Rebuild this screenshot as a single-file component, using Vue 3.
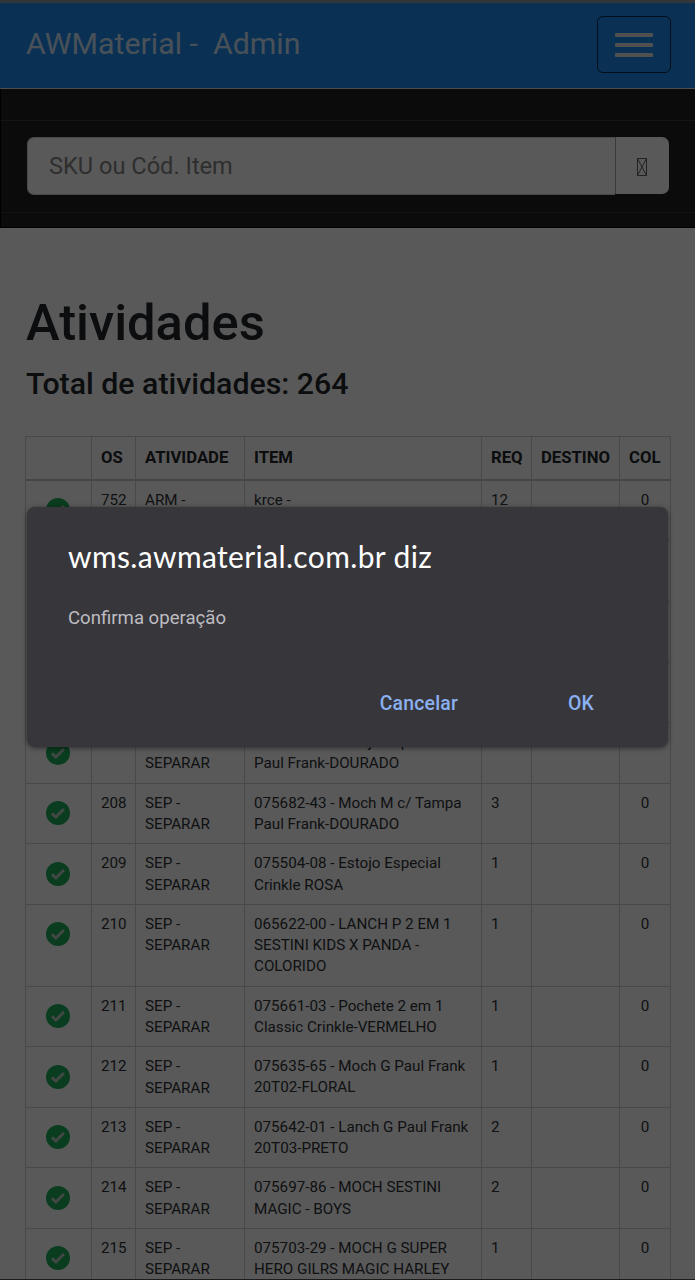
<script setup>
const columns = ['', 'OS', 'ATIVIDADE', 'ITEM', 'REQ', 'DESTINO', 'COL']

const atividades = [
  { os: 752, tipo: 'ARM -', item: ['krce -'], req: 12, col: 0 },
  {},
  {},
  {},
  { tipo: 'SEP - SEPARAR', item: ['075684-43 - Estojo Especial', 'Paul Frank-DOURADO'] },
  { os: 208, tipo: 'SEP - SEPARAR', item: ['075682-43 - Moch M c/ Tampa', 'Paul Frank-DOURADO'], req: 3, col: 0 },
  { os: 209, tipo: 'SEP - SEPARAR', item: ['075504-08 - Estojo Especial', 'Crinkle ROSA'], req: 1, col: 0 },
  { os: 210, tipo: 'SEP - SEPARAR', item: ['065622-00 - LANCH P 2 EM 1', 'SESTINI KIDS X PANDA -', 'COLORIDO'], req: 1, col: 0 },
  { os: 211, tipo: 'SEP - SEPARAR', item: ['075661-03 - Pochete 2 em 1', 'Classic Crinkle-VERMELHO'], req: 1, col: 0 },
  { os: 212, tipo: 'SEP - SEPARAR', item: ['075635-65 - Moch G Paul Frank', '20T02-FLORAL'], req: 1, col: 0 },
  { os: 213, tipo: 'SEP - SEPARAR', item: ['075642-01 - Lanch G Paul Frank', '20T03-PRETO'], req: 2, col: 0 },
  { os: 214, tipo: 'SEP - SEPARAR', item: ['075697-86 - MOCH SESTINI', 'MAGIC - BOYS'], req: 2, col: 0 },
  { os: 215, tipo: 'SEP - SEPARAR', item: ['075703-29 - MOCH G SUPER', 'HERO GILRS MAGIC HARLEY'], req: 1, col: 0 }
]
</script>

<template>
  <div class="screen">
    <nav class="navbar">
      <span class="brand">AWMaterial -&nbsp; Admin</span>
      <button class="toggler" aria-label="Menu">
        <span class="bar"></span>
        <span class="bar"></span>
        <span class="bar"></span>
      </button>
    </nav>

    <div class="search-area">
      <div class="search-row">
        <div class="search-group">
          <input class="search-input" type="text" placeholder="SKU ou Cód. Item" />
          <button class="search-button" aria-label="Buscar">
            <svg width="10" height="18" viewBox="0 0 10 18">
              <path d="M0.5 0.5h9v17h-9zM0.5 0.5l9 17M9.5 0.5l-9 17" />
            </svg>
          </button>
        </div>
      </div>
    </div>

    <main class="content">
      <h1>Atividades</h1>
      <h2>Total de atividades: 264</h2>

      <table class="table">
        <thead>
          <tr>
            <th v-for="column in columns" :key="column">{{ column }}</th>
          </tr>
        </thead>
        <tbody>
          <tr v-for="(a, index) in atividades" :key="index">
            <td class="check">
              <svg width="24" height="24" viewBox="0 0 24 24">
                <circle cx="12" cy="12" r="12" />
                <path d="M6 12.4l3.9 3.6 8-8" />
              </svg>
            </td>
            <td>{{ a.os }}</td>
            <td class="tipo">{{ a.tipo }}</td>
            <td><div v-for="line in a.item" :key="line" class="line">{{ line }}</div></td>
            <td>{{ a.req }}</td>
            <td></td>
            <td class="center">{{ a.col }}</td>
          </tr>
        </tbody>
      </table>
    </main>

    <div class="backdrop">
      <div class="dialog" role="dialog">
        <div class="dialog-title">wms.awmaterial.com.br diz</div>
        <div class="dialog-text">Confirma operação</div>
        <div class="dialog-actions">
          <button>Cancelar</button>
          <button>OK</button>
        </div>
      </div>
    </div>
  </div>
</template>

<style>
body {
  margin: 0;
  background: #595959;
}
</style>

<style scoped>
.screen {
  position: relative;
  box-sizing: border-box;
  width: 695px;
  height: 1280px;
  overflow: hidden;
  background: #fff;
  border-bottom: 1px solid #1c1c1c;
  color: #212529;
  font-family: Roboto, "Liberation Sans", sans-serif;
}

.navbar {
  box-sizing: border-box;
  height: 89px;
  padding: 0 24px 0 26px;
  display: flex;
  align-items: center;
  justify-content: space-between;
  background: #1d8cf0;
  border-top: 3px solid #8f9aa3;
  border-bottom: 1px solid #d3e2ef;
}

.brand {
  margin-top: -3px;
  font-size: 30.3px;
  line-height: 36px;
  color: rgba(255, 255, 255, 0.8);
  white-space: pre;
}

.toggler {
  box-sizing: border-box;
  width: 74px;
  height: 57px;
  margin-top: -2px;
  padding: 0;
  display: flex;
  flex-direction: column;
  align-items: center;
  justify-content: center;
  gap: 6px;
  background: none;
  border: 1px solid #06294a;
  border-radius: 6px;
}

.bar {
  width: 38px;
  height: 4px;
  border-radius: 1px;
  background: #e4e4e4;
}

.search-area {
  box-sizing: border-box;
  height: 139px;
  padding: 31px 0 14px;
  background: #222;
  border-bottom: 1px solid #000;
  border-left: 1px solid #000;
}

.search-row {
  box-sizing: border-box;
  height: 93px;
  padding: 16px 26px 18px;
  border-top: 1px solid #3e3e3e;
  border-bottom: 1px solid #343434;
}

.search-group {
  display: flex;
  height: 58px;
}

.search-input {
  box-sizing: border-box;
  flex: 1;
  min-width: 0;
  padding: 0 21px;
  border: 1px solid #d2d2d2;
  border-right: 0;
  border-radius: 7px 0 0 7px;
  background: #fff;
  font-family: inherit;
  font-size: 23.6px;
}

.search-input::placeholder {
  color: #858585;
}

.search-button {
  box-sizing: border-box;
  width: 54px;
  height: 57px;
  padding: 2px 1px 0 0;
  display: flex;
  align-items: center;
  justify-content: center;
  background: #fff;
  border: 0;
  border-left: 1px solid #aaa;
  border-radius: 0 7px 7px 0;
}

.search-button svg {
  fill: none;
  stroke: #555;
  stroke-width: 0.9;
}

.content {
  padding: 65px 25px 0;
}

h1 {
  margin: 0 0 0 1px;
  font-size: 50.7px;
  font-weight: 500;
  line-height: 60px;
}

h2 {
  margin: 13px 0 0 1px;
  font-size: 30.3px;
  font-weight: 500;
  line-height: 36px;
}

.table {
  display: block;
  width: 646px;
  margin-top: 34px;
  box-sizing: border-box;
  border-left: 1px solid #d0d2d4;
  border-top: 1px solid #d0d2d4;
  font-size: 15.2px;
  line-height: 21.2px;
}

thead,
tbody {
  display: block;
}

tr {
  display: grid;
  grid-template-columns: 66px 44px 109px 237px 50px 88px 51px;
}

th,
td {
  box-sizing: border-box;
  padding: 9px 9px 8.2px;
  border-right: 1px solid #d0d2d4;
  border-bottom: 1px solid #d0d2d4;
  text-align: left;
  white-space: nowrap;
}

td {
  min-height: 60.6px;
  color: #2e3236;
}

th {
  height: 43.8px;
  padding: 10px 9px 9px;
  border-bottom: 2px solid #c4c7ca;
  font-size: 16.7px;
  font-weight: 700;
}

.tipo {
  white-space: normal;
}

.line {
  height: 21.2px;
}

.center {
  text-align: center;
}

.check {
  padding: 17.4px 0 0 20px;
}

.check svg {
  display: block;
}

.check circle {
  fill: #1fae5a;
}

.check path {
  fill: none;
  stroke: #c3cfc7;
  stroke-width: 2.8;
}

.backdrop {
  position: absolute;
  inset: 0;
  padding: 507px 27px 0;
  background: rgba(0, 0, 0, 0.65);
}

.dialog {
  box-sizing: border-box;
  height: 240px;
  padding: 31px 41px 0;
  border-radius: 8px;
  background: #37363b;
  box-shadow: 0 1px 5px rgba(0, 0, 0, 0.5);
}

.dialog-title {
  font-family: Lato, Roboto, sans-serif;
  font-size: 30px;
  line-height: 36px;
  letter-spacing: 0.37px;
  white-space: nowrap;
  color: #fff;
}

.dialog-text {
  margin-top: 32px;
  font-size: 18.6px;
  line-height: 24px;
  color: #bdbcc1;
}

.dialog-actions {
  display: flex;
  justify-content: flex-end;
  gap: 110px;
  margin-top: 62px;
  padding-right: 33px;
}

.dialog-actions button {
  padding: 0;
  border: 0;
  background: none;
  font-family: Roboto, sans-serif;
  font-size: 19.4px;
  font-weight: 500;
  line-height: 24px;
  letter-spacing: 0.2px;
  color: #8ab0f0;
}
</style>
